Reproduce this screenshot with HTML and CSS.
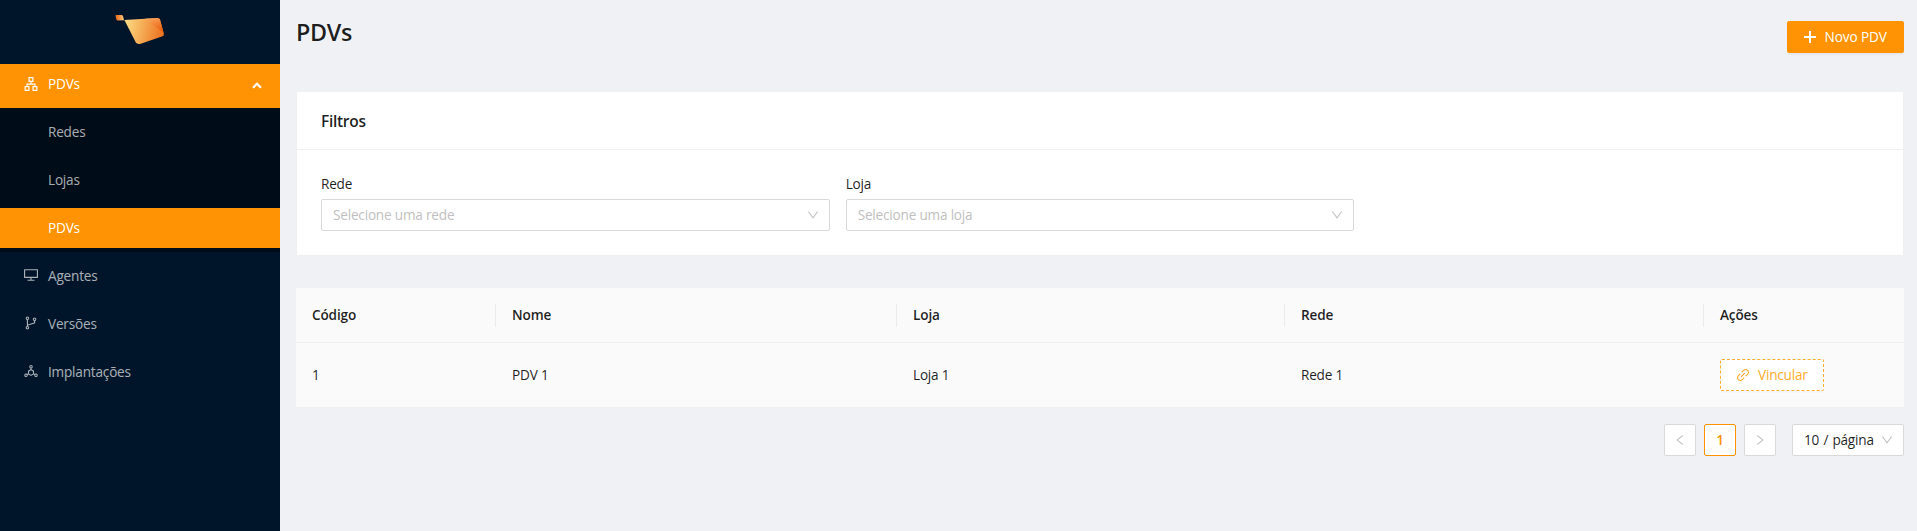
FILE: index.html
```html
<!DOCTYPE html>
<html lang="pt-BR">
<head>
<meta charset="utf-8">
<title>PDVs</title>
<link rel="stylesheet" href="styles.css">
</head>
<body>
<div class="layout">
  <aside class="sidebar">
    <div class="logo">
      <svg width="50.500" height="31" viewBox="0 0 50 31" preserveAspectRatio="none">
        <defs>
          <linearGradient id="flag" x1="0" y1="0" x2="1" y2="0.15"><stop offset="0.05" stop-color="#fbdc83"/><stop offset="1" stop-color="#ee7624"/></linearGradient>
          <linearGradient id="fold" x1="0" y1="0" x2="0.6" y2="1"><stop offset="0" stop-color="#fbb068"/><stop offset="1" stop-color="#ec600f"/></linearGradient>
          <linearGradient id="tip" x1="0" y1="0" x2="1" y2="0"><stop offset="0.2" stop-color="#ee7426"/><stop offset="1" stop-color="#fbcf80"/></linearGradient>
        </defs>
        <path fill="url(#tip)" d="M1 1h5.500q1 0 1.300 1L9 6.300 3 6.500q-1.300 0-1.700-1.200L.6 2Q.5 1 1 1z"/>
        <path fill="url(#flag)" d="M9.300 6L42 4q2 0 2.500 1.500l3.800 14q.5 2-1.200 2.700L25.500 29.700q-3.500 1-5-1.500z"/>
        <path fill="url(#fold)" d="M29.800 4.700L42 4q2 0 2.500 1.500l3.600 13.300z"/>
      </svg>
    </div>
    <nav class="menu">
      <a class="item item-open">
        <svg class="icon" viewBox="64 64 896 896"><path d="M908 640H804V488c0-4.400-3.600-8-8-8H548v-96h108c8.800 0 16-7.200 16-16V80c0-8.800-7.200-16-16-16H368c-8.800 0-16 7.200-16 16v288c0 8.800 7.200 16 16 16h108v96H228c-4.400 0-8 3.600-8 8v152H116c-8.800 0-16 7.200-16 16v288c0 8.800 7.200 16 16 16h288c8.800 0 16-7.200 16-16V656c0-8.800-7.200-16-16-16H292v-88h440v88H620c-8.800 0-16 7.200-16 16v288c0 8.800 7.200 16 16 16h288c8.800 0 16-7.200 16-16V656c0-8.800-7.200-16-16-16zm-564 76v168H176V716h168zm84-408V140h168v168H428zm420 576H680V716h168v168z"/></svg>
        <span>PDVs</span>
        <svg class="arrow" width="10" height="7" viewBox="0 0 10 7"><path d="M1 5.700L5 1.800 9 5.700" fill="none" stroke="#fff" stroke-width="2.300"/></svg>
      </a>
      <div class="submenu">
        <a class="item sub">Redes</a>
        <a class="item sub">Lojas</a>
        <a class="item sub selected">PDVs</a>
      </div>
      <a class="item">
        <svg class="icon" viewBox="64 64 896 896"><path d="M928 140H96c-17.700 0-32 14.300-32 32v496c0 17.700 14.300 32 32 32h380v112H304c-8.800 0-16 7.200-16 16v48c0 4.400 3.600 8 8 8h432c4.400 0 8-3.600 8-8v-48c0-8.800-7.200-16-16-16H548V700h380c17.700 0 32-14.300 32-32V172c0-17.700-14.300-32-32-32zm-40 488H136V212h752v416z"/></svg>
        <span>Agentes</span>
      </a>
      <a class="item">
        <svg class="icon" viewBox="64 64 896 896"><path d="M740 161c-61.800 0-112 50.200-112 112 0 50.100 33.100 92.600 78.500 106.900v95.900L320 602.400V318.100c44.200-15 76-56.900 76-106.100 0-61.800-50.200-112-112-112s-112 50.200-112 112c0 49.200 31.800 91 76 106.100V706c-44.200 15-76 56.900-76 106.100 0 61.800 50.200 112 112 112s112-50.200 112-112c0-49.200-31.800-91-76-106.100v-27.800l423.500-138.700a50.520 50.520 0 0034.900-48.200V378.200c42.900-15.800 73.600-57 73.600-105.200 0-61.800-50.200-112-112-112zm-504 51a48.010 48.010 0 0196 0 48.010 48.010 0 01-96 0zm96 600a48.010 48.010 0 01-96 0 48.010 48.010 0 0196 0zm408-491a48.010 48.010 0 010-96 48.010 48.010 0 010 96z"/></svg>
        <span>Versões</span>
      </a>
      <a class="item">
        <svg class="icon" viewBox="64 64 896 896"><path d="M888.300 693.200c-42.500-24.600-94.300-18-129.200 12.800l-53-30.700V523.600c0-15.700-8.400-30.300-22-38.100l-136-78.300v-67.100c44.200-15 76-56.800 76-106.100 0-61.900-50.100-112-112-112s-112 50.100-112 112c0 49.300 31.800 91.100 76 106.100v67.100l-136 78.300c-13.600 7.800-22 22.400-22 38.100v151.600l-53 30.700c-34.900-30.800-86.800-37.400-129.200-12.800-53.500 31-71.700 99.400-41 152.900 30.800 53.500 98.900 71.900 152.200 41 42.500-24.600 62.700-73 53.600-118.800l48.700-28.300 140.600 81c6.800 3.900 14.400 5.900 22 5.900s15.200-2 22-5.900L674.500 740l48.700 28.300c-9.100 45.700 11.200 94.200 53.600 118.800 53.300 30.900 121.500 12.600 152.200-41 30.800-53.600 12.600-122-40.700-152.900zm-673 138.400a47.600 47.600 0 01-65.200-17.600c-13.200-22.900-5.400-52.300 17.500-65.500a47.600 47.600 0 0165.200 17.600c13.200 22.900 5.400 52.300-17.500 65.500zM464 234a48.010 48.010 0 0196 0 48.010 48.010 0 01-96 0zm170 446.200l-122 70.300-122-70.300V539.800l122-70.300 122 70.300v140.400zm239.900 133.900c-13.200 22.900-42.400 30.800-65.200 17.600-22.800-13.200-30.700-42.600-17.500-65.500s42.400-30.800 65.200-17.600c22.900 13.200 30.700 42.500 17.500 65.500z"/></svg>
        <span>Implantações</span>
      </a>
    </nav>
  </aside>
  <main class="content">
    <header class="page-header">
      <h1 class="title">PDVs</h1>
      <button class="btn btn-primary">
        <svg class="plus" width="12" height="12" viewBox="0 0 12 12"><path d="M5 0h2v5h5v2H7v5H5V7H0V5h5z"/></svg>
        <span>Novo PDV</span>
      </button>
    </header>
    <section class="card">
      <h2 class="card-head">Filtros</h2>
      <div class="card-body">
        <div class="field">
          <label class="label">Rede</label>
          <div class="select">
            <span class="placeholder">Selecione uma rede</span>
            <svg class="chevron" viewBox="64 64 896 896"><path d="M884 256h-75c-5.100 0-9.900 2.500-12.900 6.600L512 654.200 227.900 262.600c-3-4.100-7.800-6.600-12.900-6.600h-75c-6.500 0-10.300 7.400-6.500 12.700l352.600 486.100c12.800 17.600 39 17.600 51.700 0l352.600-486.100c3.900-5.300.1-12.700-6.400-12.700z"/></svg>
          </div>
        </div>
        <div class="field">
          <label class="label">Loja</label>
          <div class="select">
            <span class="placeholder">Selecione uma loja</span>
            <svg class="chevron" viewBox="64 64 896 896"><path d="M884 256h-75c-5.100 0-9.900 2.500-12.900 6.600L512 654.200 227.900 262.600c-3-4.100-7.800-6.600-12.900-6.600h-75c-6.500 0-10.300 7.400-6.500 12.700l352.600 486.100c12.800 17.600 39 17.600 51.700 0l352.600-486.100c3.900-5.300.1-12.700-6.400-12.700z"/></svg>
          </div>
        </div>
      </div>
    </section>
    <div class="table">
      <div class="row head">
        <div class="cell"><span>Código</span></div>
        <div class="cell"><span>Nome</span></div>
        <div class="cell"><span>Loja</span></div>
        <div class="cell"><span>Rede</span></div>
        <div class="cell"><span>Ações</span></div>
      </div>
      <div class="row">
        <div class="cell">1</div>
        <div class="cell">PDV 1</div>
        <div class="cell">Loja 1</div>
        <div class="cell">Rede 1</div>
        <div class="cell">
          <button class="btn btn-dashed">
            <svg class="link" viewBox="64 64 896 896"><path d="M574 665.400a8.030 8.030 0 00-11.300 0L446.500 781.600c-53.800 53.800-144.600 59.500-204 0-59.500-59.500-53.800-150.200 0-204l116.200-116.200c3.100-3.100 3.100-8.200 0-11.300l-39.800-39.800a8.030 8.030 0 00-11.300 0L191.400 526.500c-84.600 84.600-84.600 221.500 0 306s221.500 84.600 306 0l116.200-116.200c3.100-3.100 3.100-8.200 0-11.300L574 665.400zm258.600-474c-84.600-84.600-221.500-84.600-306 0L410.300 307.600a8.030 8.030 0 000 11.300l39.700 39.700c3.100 3.100 8.200 3.100 11.300 0l116.200-116.200c53.800-53.800 144.600-59.500 204 0 59.500 59.500 53.800 150.200 0 204L665.300 562.600a8.030 8.030 0 000 11.300l39.800 39.800c3.100 3.100 8.200 3.100 11.300 0l116.200-116.200c84.500-84.600 84.500-221.500 0-306.100zM610.100 372.300a8.030 8.030 0 00-11.300 0L372.300 598.700a8.030 8.030 0 000 11.300l39.600 39.600c3.100 3.100 8.200 3.100 11.300 0l226.400-226.400c3.100-3.100 3.100-8.200 0-11.300l-39.500-39.600z"/></svg>
            <span>Vincular</span>
          </button>
        </div>
      </div>
    </div>
    <div class="pagination">
      <span class="page"><svg class="chevron" viewBox="64 64 896 896"><path d="M724 218.300V141c0-6.700-7.700-10.400-12.900-6.300L260.300 486.800a31.860 31.860 0 000 50.300l450.800 352.100c5.300 4.100 12.900.4 12.900-6.300v-77.300c0-4.900-2.300-9.600-6.100-12.600l-360-281 360-281.100c3.800-3 6.100-7.700 6.100-12.600z"/></svg></span>
      <span class="page current">1</span>
      <span class="page"><svg class="chevron" viewBox="64 64 896 896"><path d="M765.700 486.800L314.900 134.700A7.970 7.970 0 00302 141v77.300c0 4.900 2.300 9.600 6.100 12.600l360 281.100-360 281.100c-3.900 3-6.100 7.700-6.100 12.600V883c0 6.700 7.700 10.400 12.900 6.300l450.800-352.100a31.960 31.960 0 000-50.400z"/></svg></span>
      <div class="select size">
        <span>10 / página</span>
        <svg class="chevron" viewBox="64 64 896 896"><path d="M884 256h-75c-5.100 0-9.900 2.500-12.900 6.600L512 654.200 227.900 262.600c-3-4.100-7.800-6.600-12.900-6.600h-75c-6.500 0-10.300 7.400-6.500 12.700l352.600 486.100c12.800 17.600 39 17.600 51.700 0l352.600-486.100c3.900-5.300.1-12.700-6.400-12.700z"/></svg>
      </div>
    </div>
  </main>
</div>
</body>
</html>
```
FILE: styles.css
```css
* { box-sizing: border-box; }
body {
  margin: 0;
  background: #f0f1f5;
  color: rgba(0, 0, 0, .88);
  font: 13.6px/22px "Open Sans", "Noto Sans", sans-serif;
  letter-spacing: -.2px;
}
svg { display: block; fill: currentColor; flex: none; }
.layout { display: flex; height: 100vh; overflow: hidden; }

.sidebar { width: 280px; flex: none; background: #001529; color: rgba(255, 255, 255, .67); }
.logo { height: 64px; padding: 14px 0 0 115px; }
.item { display: flex; align-items: center; height: 40px; margin: 4px 0; padding: 0 18px 0 24px; }
.menu { display: flex; flex-direction: column; }
.icon { width: 14px; height: 14px; margin: -2px 10px 0 0; }
.item-open { height: 44px; margin: 0; padding-bottom: 4px; background: #ff9303; color: #fff; }
.item-open .icon { margin-top: 0; }
.arrow { margin: 2px 0 0 auto; }
.submenu { display: flex; flex-direction: column; background: #000c17; }
.sub { padding-left: 48px; }
.selected { background: #ff9303; color: #fff; }

.content { flex: 1; min-width: 0; padding: 0 13px 0 16px; }
.page-header { display: flex; justify-content: space-between; height: 91px; padding-top: 21px; }
.title { margin: -5px 0 0; font-size: 23.300px; line-height: 32px; font-weight: 600; letter-spacing: -.3px; }
.btn {
  display: flex; align-items: center; gap: 8px; height: 32px; padding: 0 15px;
  border: 1px solid; border-radius: 2px; font: inherit; letter-spacing: inherit;
  box-shadow: 0 2px 0 rgba(0, 0, 0, .03);
}
.btn-primary { width: 117px; padding-left: 16px; gap: 8.500px; background: #ff9303; border-color: #ff9303; color: #fff; letter-spacing: -.1px; }
.btn-dashed { width: 104px; background: #fff; border: 1px dashed #ffab2b; color: #ffab2b; box-shadow: 0 2px 0 rgba(0, 0, 0, .015); }
.link { width: 14px; height: 14px; }

.card { height: 165px; background: #fff; border: 1px solid #f0f0f0; }
.card-head { height: 58px; margin: 0; padding: 17px 24px 0; border-bottom: 1px solid #f0f0f0; font-size: 15.500px; line-height: 24px; font-weight: 600; letter-spacing: -.3px; }
.card-body { display: grid; grid-template-columns: repeat(3, 1fr); gap: 16px; padding: 24px; }
.field { display: flex; flex-direction: column; gap: 3px; }
.label { height: 22px; line-height: 20px; }
.select {
  display: flex; align-items: center; justify-content: space-between; height: 32px; padding: 0 10px 0 11px;
  background: #fff; border: 1px solid #d9d9d9; border-radius: 2px;
}
.placeholder { color: #bfbfbf; }
.chevron { width: 12px; height: 12px; color: #bfbfbf; }

.table { margin-top: 32px; background: #fafafa; }
.row { display: grid; grid-template-columns: 200px 401px 388px 419px 200px; height: 65px; border-bottom: 1px solid #f0f0f0; }
.cell { display: flex; align-items: center; padding-left: 16px; }
.head { height: 55px; font-weight: 600; letter-spacing: -.15px; }
.head .cell:not(:last-child)::after { content: ""; width: 1px; height: 23px; margin-left: auto; background: #ebebeb; }

.pagination { display: flex; justify-content: flex-end; gap: 8px; margin-top: 16px; }
.page { display: flex; align-items: center; justify-content: center; width: 32px; height: 32px; background: #fff; border: 1px solid #d9d9d9; border-radius: 2px; }
.current { border-color: #ff9303; color: #ff9303; font-weight: 600; }
.size { width: 112px; margin-left: 8px; word-spacing: .9px; }
```
